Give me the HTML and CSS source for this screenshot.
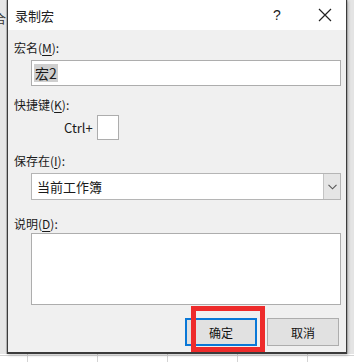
FILE: index.html
```html
<!DOCTYPE html>
<html lang="zh-CN">
<head>
  <meta charset="UTF-8">
  <title>录制宏</title>
  <link rel="stylesheet" href="styles.css">
</head>
<body>
  <div class="sheet_side">
    <span class="sheet_char">合</span>
  </div>
  <div class="sheet_right"></div>

  <!-- 录制宏 对话框 -->
  <div class="dialog">
    <div class="title_bar">
      <span class="title">录制宏</span>
      <span class="title_help">?</span>
      <svg class="title_close" width="14" height="14" viewBox="0 0 14 14">
        <path d="M1 1 L13 13 M13 1 L1 13" stroke="#222" stroke-width="1.2" fill="none"/>
      </svg>
    </div>

    <div class="dialog_body">
      <div class="label">宏名(<u>M</u>):</div>
      <div class="field field_name"><span class="selected">宏2</span></div>

      <div class="label label_key">快捷键(<u>K</u>):</div>
      <div class="key_row">
        <span class="key_ctrl">Ctrl+</span>
        <span class="key_box"></span>
      </div>

      <div class="label label_save">保存在(<u>I</u>):</div>
      <div class="field field_select">
        <span class="select_text">当前工作簿</span>
        <span class="select_btn">
          <svg width="9" height="6" viewBox="0 0 9 6">
            <path d="M0.5 0.8 L4.5 4.8 L8.5 0.8" stroke="#555" stroke-width="1.1" fill="none"/>
          </svg>
        </span>
      </div>

      <div class="label label_desc">说明(<u>D</u>):</div>
      <div class="field field_desc"></div>

      <div class="btn_row">
        <button class="btn btn_ok">确定</button>
        <button class="btn">取消</button>
      </div>
    </div>
  </div>
</body>
</html>
```

FILE: styles.css
```css
body {
  margin: 0;
  width: 354px;
  height: 362px;
  overflow: hidden;
  position: relative;
  font-family: "Noto Sans CJK SC", "Noto Sans", sans-serif;
  font-size: 12px;
  color: #1a1a1a;
  background-color: #fff;
  background-image:
    linear-gradient(to right, #d4d4d4 1px, transparent 1px),
    linear-gradient(to bottom, #d4d4d4 1px, transparent 1px);
  background-size: 70px 20px, 70px 20px;
  background-position: 27px 0, 0 15px;
}

/* 시트 가장자리 */
.sheet_side {
  position: absolute;
  left: 0;
  top: 0;
  width: 6px;
  height: 354px;
  background: #e6e6e6;
  border-right: 1px solid #b8b8b8;
  overflow: hidden;
}
.sheet_char {
  position: absolute;
  top: 10px;
  left: -6px;
  font-size: 12px;
  color: #333;
}
.sheet_right {
  position: absolute;
  right: 0;
  top: 0;
  width: 6px;
  height: 354px;
  background: #e4e4e4;
  border-left: 1px solid #c8c8c8;
}

.dialog {
  position: relative;
  margin-left: 7px;
  width: 338px;
  height: 352px;
  background: #f0f0f0;
  border: 1px solid #3b3b3b;
  border-top: 0;
  border-bottom-width: 2px;
  box-shadow: 1px 1px 3px rgba(0, 0, 0, 0.25);
}

.title_bar {
  display: flex;
  align-items: center;
  height: 30px;
  background: #fff;
  padding-left: 7px;
}
.title {
  flex: 1;
  font-size: 13px;
  color: #222;
}
.title_help {
  font-family: "Liberation Sans", sans-serif;
  font-size: 14px;
  width: 14px;
  margin-right: 31px;
}
.title_close {
  margin-right: 14px;
}

.dialog_body {
  padding: 9px 6px 0 6px;
}

.label {
  height: 18px;
  line-height: 18px;
  font-size: 12px;
}
.label u {
  text-underline-offset: 2px;
}

.field {
  box-sizing: border-box;
  margin-left: 17px;
  width: 310px;
  background: #fff;
  border: 1px solid #adadad;
}
.field_name {
  height: 26px;
  margin-top: 3px;
  display: flex;
  align-items: center;
  padding-left: 2px;
}
.selected {
  background: #cfcfcf;
  font-size: 14px;
  line-height: 18px;
  padding: 0 1px;
}

.label_key {
  margin-top: 10px;
}
.key_row {
  display: flex;
  align-items: center;
  margin-left: 50px;
  margin-top: 1px;
  height: 25px;
}
.key_ctrl {
  font-size: 13px;
  margin-right: 4px;
}
.key_box {
  width: 22px;
  height: 25px;
  box-sizing: border-box;
  background: #fff;
  border: 1px solid #adadad;
}

.label_save {
  margin-top: 12px;
}
.field_select {
  height: 27px;
  margin-top: 3px;
  display: flex;
  align-items: center;
  border-color: #b5b5b5;
}
.select_text {
  flex: 1;
  font-size: 13px;
  padding-left: 5px;
}
.select_btn {
  display: flex;
  align-items: center;
  justify-content: center;
  width: 16px;
  height: 25px;
  background: #e5e5e5;
  border-left: 1px solid #c4c4c4;
}

.label_desc {
  margin-top: 15px;
}
.field_desc {
  height: 72px;
  margin-top: 0;
}

.btn_row {
  display: flex;
  justify-content: flex-end;
  gap: 10px;
  margin-top: 13px;
  margin-right: 1px;
}
.btn {
  box-sizing: border-box;
  width: 72px;
  height: 28px;
  background: #e1e1e1;
  border: 1px solid #adadad;
  font-family: "Noto Sans CJK SC", sans-serif;
  font-size: 12px;
  color: #111;
  padding: 0;
}
.btn_ok {
  position: relative;
  border: 2px solid #0a78d7;
  width: 72px;
}
/* 강조 표시 빨간 테두리 */
.btn_ok::after {
  content: "";
  position: absolute;
  left: 4px;
  top: -14px;
  width: 64px;
  height: 36px;
  border: 5px solid #ee2b2b;
}
```
